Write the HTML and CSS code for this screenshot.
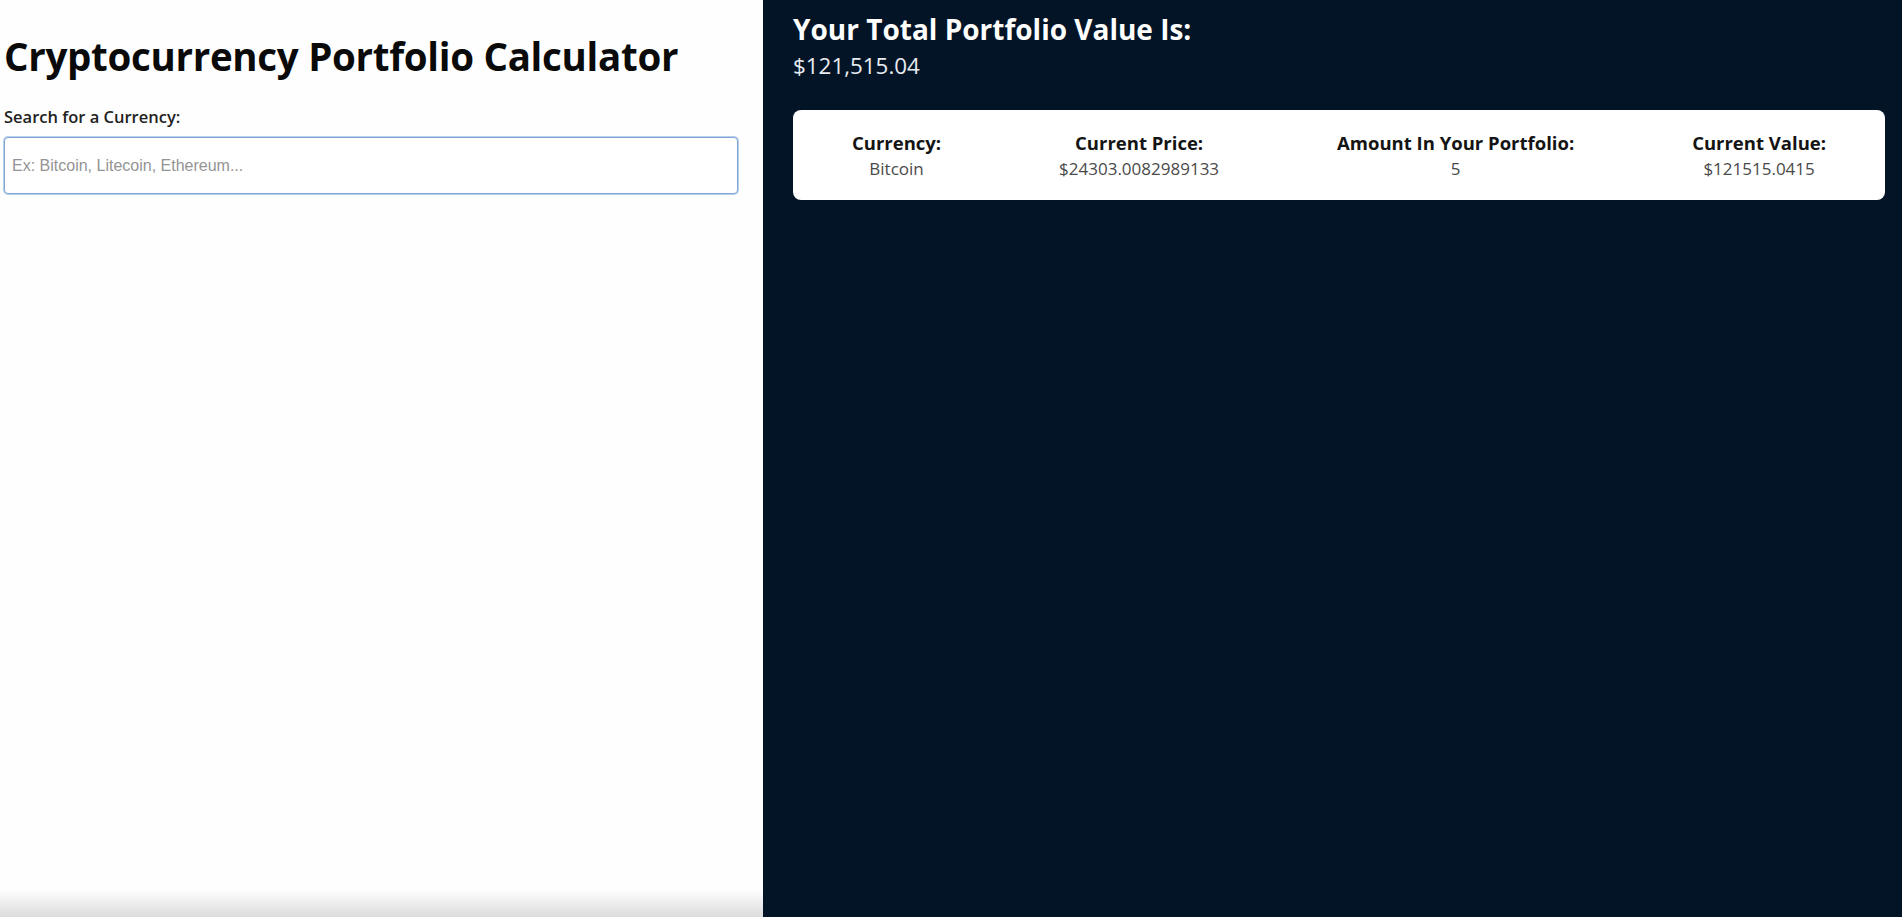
FILE: index.html
```html
<!DOCTYPE html>
<html lang="en">
<head>
<meta charset="utf-8">
<title>Cryptocurrency Portfolio Calculator</title>
<link rel="stylesheet" href="styles.css">
</head>
<body>
<div class="app">
  <section class="left">
    <h1 class="title">Cryptocurrency Portfolio Calculator</h1>
    <label class="search-label" for="search">Search for a Currency:</label>
    <input class="search-input" id="search" type="text" placeholder="Ex: Bitcoin, Litecoin, Ethereum...">
  </section>
  <section class="right">
    <h2 class="total-title">Your Total Portfolio Value Is:</h2>
    <div class="total-value">$121,515.04</div>
    <div class="card">
      <div class="col">
        <div class="col-head">Currency:</div>
        <div class="col-val">Bitcoin</div>
      </div>
      <div class="col">
        <div class="col-head">Current Price:</div>
        <div class="col-val">$24303.0082989133</div>
      </div>
      <div class="col">
        <div class="col-head">Amount In Your Portfolio:</div>
        <div class="col-val">5</div>
      </div>
      <div class="col">
        <div class="col-head">Current Value:</div>
        <div class="col-val">$121515.0415</div>
      </div>
    </div>
  </section>
</div>
</body>
</html>
```

FILE: styles.css
```css
* { box-sizing: border-box; }
html, body { margin: 0; padding: 0; height: 100%; }
body {
  font-family: "Open Sans", "Noto Sans", sans-serif;
  color: #111;
}
.app {
  display: flex;
  height: 100vh;
}
.left {
  width: 763px;
  flex: none;
  padding: 0 25px 0 4px;
  display: flex;
  flex-direction: column;
  background: linear-gradient(to bottom, #fefefe 0, #fefefe 890px, #dcdcdc 917px);
}
.title {
  margin: 33px 0 0 0;
  font-size: 38.5px;
  line-height: 1.2;
  font-weight: 700;
  color: #0a0a0a;
  letter-spacing: -0.3px;
}
.search-label {
  margin-top: 27px;
  font-size: 16.5px;
  font-weight: 600;
  color: #222;
  line-height: 22px;
}
.search-input {
  margin-top: 9px;
  height: 57px;
  width: 100%;
  border: 1.5px solid #7fa6d6;
  border-radius: 4px;
  padding: 0 7px;
  font-family: "Liberation Sans", Arial, sans-serif;
  font-size: 16px;
  outline: none;
  box-shadow: 0 0 0 1px #b9d0ec;
}
.search-input::placeholder { color: #949494; }
.right {
  flex: 1;
  background: #031427;
  padding: 0 17px 0 30px;
  display: flex;
  flex-direction: column;
}
.total-title {
  margin: 12px 0 0 0;
  font-size: 28px;
  line-height: 1.25;
  font-weight: 700;
  color: #ffffff;
}
.total-value {
  margin-top: 4px;
  font-size: 22.4px;
  line-height: 1.3;
  color: #e8ecf0;
}
.card {
  margin-top: 30px;
  height: 90px;
  padding-top: 3px;
  background: #ffffff;
  border-radius: 8px;
  display: flex;
  justify-content: space-around;
  align-items: center;
}
.col {
  text-align: center;
  display: flex;
  flex-direction: column;
}
.col-head {
  font-size: 18.5px;
  font-weight: 700;
  color: #141414;
  line-height: 24px;
}
.col-val {
  font-size: 17px;
  color: #4a4a4a;
  line-height: 27px;
}
```
